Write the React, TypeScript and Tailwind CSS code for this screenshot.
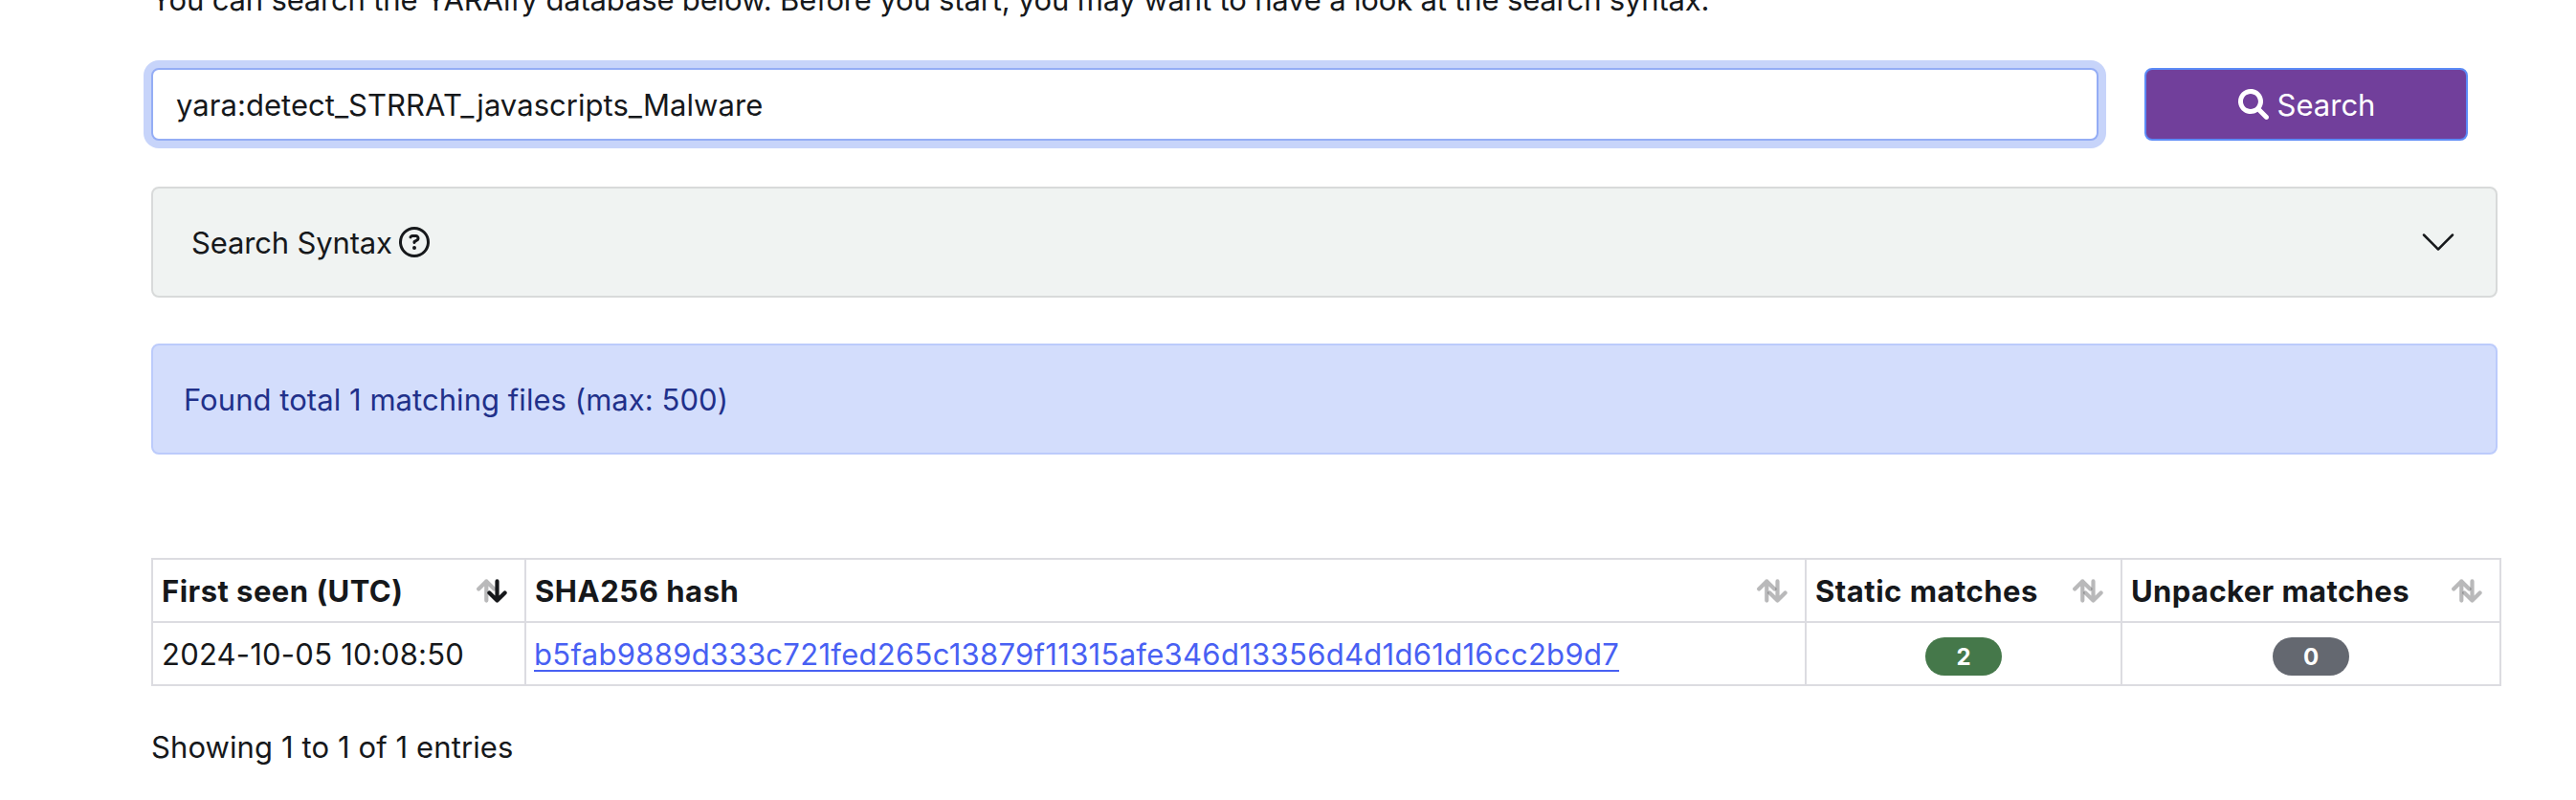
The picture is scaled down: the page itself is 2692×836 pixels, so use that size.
import { BsChevronDown } from "react-icons/bs";
import { FaRegCircleQuestion } from "react-icons/fa6";

function SearchIcon() {
  return (
    <svg viewBox="0 0 512 512" fill="currentColor" className="size-8 shrink-0">
      <path d="M500.3 443.7l-119.7-119.7c27.22-40.41 40.65-90.9 33.46-144.7C401.8 87.79 326.8 13.32 235.2 1.723C99.01-15.51-15.51 99.01 1.724 235.2c11.6 91.64 86.08 166.7 177.6 178.9c53.8 7.189 104.3-6.236 144.7-33.46l119.7 119.7c15.62 15.62 40.95 15.62 56.57 0C515.9 484.7 515.9 459.3 500.3 443.7zM79.1 208c0-70.58 57.42-128 128-128s128 57.42 128 128c0 70.58-57.42 128-128 128S79.1 278.6 79.1 208z" />
    </svg>
  );
}

type SortIconProps = { descending?: boolean };

function SortIcon({ descending = false }: SortIconProps) {
  return (
    <svg
      width="32"
      height="25"
      viewBox="0 0 32 25"
      fill="none"
      stroke="#16181b"
      strokeWidth="4.2"
      strokeLinecap="round"
      strokeLinejoin="round"
      className="shrink-0"
    >
      <path d="M10.3 22.6V2.4M2.2 10.5l8.1-8.1 8.1 8.1" opacity="0.3" />
      <path d="M21.5 2.4v20.2M13.4 14.5l8.1 8.1 8.1-8.1" opacity={descending ? 1 : 0.3} />
    </svg>
  );
}

type Column = { label: string; tracking: string; descending?: boolean };

const columns: Column[] = [
  { label: "First seen (UTC)", tracking: "tracking-[0.47px]", descending: true },
  { label: "SHA256 hash", tracking: "tracking-[0.55px]" },
  { label: "Static matches", tracking: "tracking-[0.5px]" },
  { label: "Unpacker matches", tracking: "tracking-[0.4px]" },
];

function Badge({ value, color }: { value: number; color: string }) {
  return (
    <span
      className={`mx-auto flex h-10 w-20 items-center justify-center rounded-full pt-px text-2xl font-bold text-white ${color}`}
    >
      {value}
    </span>
  );
}

export default function App() {
  return (
    <main className="h-[836px] overflow-hidden bg-white pl-[158px] font-['Inter',sans-serif] text-[31px] leading-[48px] text-[#16181b]">
      <p className="-mt-6 whitespace-nowrap tracking-[-0.165px]">
        You can search the YARAify database below. Before you start, you may want to have a look at the
        search syntax.
      </p>

      <form className="mt-[47px] flex gap-12" onSubmit={(e) => e.preventDefault()}>
        <input
          type="text"
          defaultValue="yara:detect_STRRAT_javascripts_Malware"
          className="h-[76px] w-[2035px] rounded-lg border-2 border-[#94adf5] bg-white px-6 pt-px tracking-[0.04px] shadow-[0_0_0_8px_#c7d4fa] outline-none"
        />
        <button
          type="submit"
          className="flex h-[76px] w-[338px] items-center justify-center gap-[9px] rounded-lg border-2 border-[#5b8af6] bg-[#713f9b] pl-px text-white"
        >
          <SearchIcon />
          <span className="pt-px">Search</span>
        </button>
      </form>

      <section className="mt-12 flex h-[116px] w-[2452px] items-center justify-between rounded-lg border-2 border-[#d8dada] bg-[#f0f3f2] pr-10 pl-10">
        <span className="flex items-center gap-[7px]">
          <span className="pt-px tracking-[-0.15px]">Search Syntax</span>
          <FaRegCircleQuestion className="size-8" />
        </span>
        <BsChevronDown className="size-10" />
      </section>

      <div className="mt-12 flex h-[116px] w-[2452px] items-center rounded-lg border-2 border-[#bccbfb] bg-[#d3ddfc] px-8 tracking-[0.05px] text-[#21308a]">
        <span className="pt-px">Found total 1 matching files (max: 500)</span>
      </div>

      <table className="mt-[108px] w-[2456px] table-fixed border-collapse">
        <colgroup>
          <col className="w-[390px]" />
          <col className="w-[1338px]" />
          <col className="w-[330px]" />
          <col className="w-[396px]" />
        </colgroup>
        <thead>
          <tr className="h-[66px]">
            {columns.map((column) => (
              <th key={column.label} className="border-2 border-[#dcdce1] p-0 pr-[18px] pl-[9px]">
                <span className="flex items-center justify-between">
                  <span className={`pt-px font-bold whitespace-nowrap ${column.tracking}`}>{column.label}</span>
                  <SortIcon descending={column.descending} />
                </span>
              </th>
            ))}
          </tr>
        </thead>
        <tbody>
          <tr className="h-[66px]">
            <td className="border-2 border-[#dcdce1] p-0 pt-px pl-[9px] tracking-[0.22px]">2024-10-05 10:08:50</td>
            <td className="border-2 border-[#dcdce1] p-0 pt-px pl-2">
              <a
                href="#"
                className="tracking-[0.3px] text-[#4860f3] underline decoration-2 underline-offset-[5px]"
              >
                b5fab9889d333c721fed265c13879f11315afe346d13356d4d1d61d16cc2b9d7
              </a>
            </td>
            <td className="border-2 border-[#dcdce1] p-0 pt-1.5">
              <Badge value={2} color="bg-[#45784a]" />
            </td>
            <td className="border-2 border-[#dcdce1] p-0 pt-1.5">
              <Badge value={0} color="bg-[#646870]" />
            </td>
          </tr>
        </tbody>
      </table>

      <p className="mt-10 tracking-[0.1px]">Showing 1 to 1 of 1 entries</p>
    </main>
  );
}
